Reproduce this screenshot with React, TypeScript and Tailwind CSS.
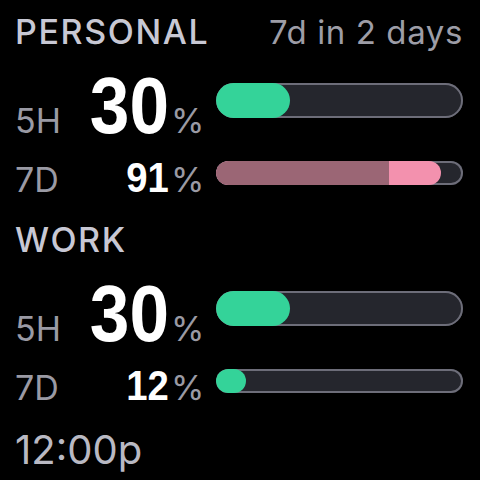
import React from "react";

interface Usage {
  label: string;
  value: number;
  big: boolean;
  fill: string;
  spent?: number;
}

interface Account {
  name: string;
  note?: string;
  rows: Usage[];
}

const accounts: Account[] = [
  {
    name: "PERSONAL",
    note: "7d in 2 days",
    rows: [
      { label: "5H", value: 30, big: true, fill: "bg-[#34d399]" },
      { label: "7D", value: 91, big: false, fill: "bg-[#f391ae]", spent: 77 },
    ],
  },
  {
    name: "WORK",
    rows: [
      { label: "5H", value: 30, big: true, fill: "bg-[#34d399]" },
      { label: "7D", value: 12, big: false, fill: "bg-[#34d399]" },
    ],
  },
];

const sans = "font-['Inter','Liberation_Sans',sans-serif]";

const UsageRow = ({ row }: { row: Usage }) => {
  return (
    <div className={`flex items-start ${row.big ? "mt-[17px]" : "mt-[10px]"}`}>
      <div className="w-[201px] flex items-baseline leading-none shrink-0">
        <span className="w-[45px] text-[34px] text-[#9a9aa4]">{row.label}</span>
        <span
          className={`w-[109px] text-right font-bold text-white font-['Liberation_Sans','Arial',sans-serif] ${
            row.big ? "text-[80px]" : "text-[43px]"
          }`}
        >
          <span className="inline-block origin-right scale-x-[0.89]">{row.value}</span>
        </span>
        <span className="ml-[2px] text-[34px] text-[#9a9aa4]">%</span>
      </div>
      <div
        className={`flex-1 flex rounded-full bg-[#25262d] shadow-[inset_0_0_0_2px_#6d6d79] overflow-hidden ${
          row.big ? "h-[35px] mt-[17px]" : "h-[24px] mt-[5px]"
        }`}
      >
        <div
          className={`h-full rounded-full overflow-hidden flex ${row.fill}`}
          style={{ width: `${row.value}%` }}
        >
          {row.spent !== undefined && (
            <div className="h-full bg-[#9b6675]" style={{ width: `${row.spent}%` }} />
          )}
        </div>
      </div>
    </div>
  );
};

export default function App() {
  return (
    <div className={`w-[480px] h-[480px] bg-black overflow-hidden pl-[15px] pr-[17px] pt-[15px] ${sans}`}>
      {accounts.map((acc, i) => (
        <div key={acc.name} className={i > 0 ? "mt-[24px]" : ""}>
          <div className="flex justify-between items-baseline leading-none">
            <span className="text-[34px] font-medium tracking-[1.6px] text-[#c8c8d4]">{acc.name}</span>
            {acc.note && (
              <span className="text-[33px] tracking-[0.6px] text-[#9d9da7]">{acc.note}</span>
            )}
          </div>
          {acc.rows.map((row) => (
            <UsageRow key={row.label} row={row} />
          ))}
        </div>
      ))}
      <div className="mt-[23px] text-[40px] leading-none text-[#b9b9c3]">12:00p</div>
    </div>
  );
}
